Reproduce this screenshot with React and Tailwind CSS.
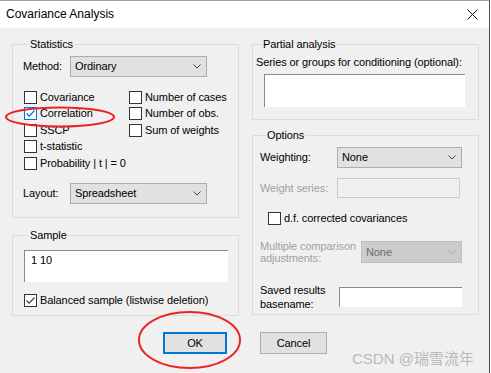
import React from "react";

const Chevron = ({ color = "#333" }) => (
  <svg width="8" height="5" viewBox="0 0 8 5" className="shrink-0">
    <path d="M0.5 0.5 L4 4 L7.5 0.5" fill="none" stroke={color} strokeWidth="1" />
  </svg>
);

const Select = ({ value, width, disabled }) => (
  <div
    className={`flex items-center justify-between pl-[4px] pr-[5px] border ${
      disabled ? "bg-[#cccccc] border-[#bfbfbf] text-[#6d6d6d] h-[22px]" : "bg-[#e1e1e1] border-[#adadad] text-black h-[21px]"
    }`}
    style={{ width }}
  >
    <span>{value}</span>
    <Chevron color={disabled ? "#a8a8a8" : "#444"} />
  </div>
);

const Check = ({ checked, blue }) => (
  <div
    className={`w-[13px] h-[13px] shrink-0 bg-white border flex items-center justify-center ${
      blue ? "border-[#0078d7]" : "border-[#333]"
    }`}
  >
    {checked && (
      <svg width="11" height="11" viewBox="0 0 11 11">
        <path d="M1.5 5.5 L4.2 8.2 L9.5 2.5" fill="none" stroke={blue ? "#0078d7" : "#444"} strokeWidth="1.2" />
      </svg>
    )}
  </div>
);

const CheckRow = ({ label, checked, blue }) => (
  <div className="flex items-center h-[16.5px] gap-[3px]">
    <Check checked={checked} blue={blue} />
    <span className="whitespace-nowrap">{label}</span>
  </div>
);

const Group = ({ title, className, children }) => (
  <div className={`border border-[#dcdcdc] flex flex-col ${className}`}>
    <div className="-mt-[7px] ml-[6px] px-[1px] h-[13px] leading-[13px] w-fit bg-[#f0f0f0]">{title}</div>
    {children}
  </div>
);

const TextBox = ({ className, children }) => (
  <div className={`bg-white border-t border-l border-[#8a8a8a] ${className}`}>{children}</div>
);

export default function App() {
  return (
    <div
      className="w-[491px] h-[373px] bg-white flex text-[11px] leading-[13px] tracking-[-0.1px] text-black overflow-hidden"
      style={{ fontFamily: '"Liberation Sans", Arial, sans-serif' }}
    >
      <div className="w-[490px] h-full flex flex-col border-t border-r border-t-[#a0a0a0] border-r-[#4a4a4a] relative">
        <div className="h-[27px] shrink-0 bg-white flex items-center justify-between pl-[6px] pr-[11px]">
          <span className="text-[12px] tracking-normal">Covariance Analysis</span>
          <svg width="11" height="11" viewBox="0 0 11 11">
            <path d="M0.5 0.5 L10.5 10.5 M10.5 0.5 L0.5 10.5" stroke="#111" strokeWidth="1" />
          </svg>
        </div>

        <div className="flex-1 bg-[#f0f0f0] flex flex-col pt-[16px]">
          <div className="flex items-start pl-[12px] gap-[13px]">
            <div className="w-[227px] flex flex-col">
              <Group title="Statistics" className="h-[174px] px-[10px]">
                <div className="flex items-center mt-[5px]">
                  <span className="w-[47px]">Method:</span>
                  <Select value="Ordinary" width={137} />
                </div>
                <div className="flex mt-[12px] pl-[1px]">
                  <div className="w-[105px] flex flex-col">
                    <CheckRow label="Covariance" />
                    <CheckRow label="Correlation" checked blue />
                    <CheckRow label="SSCP" />
                    <CheckRow label="t-statistic" />
                    <CheckRow label="Probability  |  t  |  = 0" />
                  </div>
                  <div className="flex flex-col">
                    <CheckRow label="Number of cases" />
                    <CheckRow label="Number of obs." />
                    <CheckRow label="Sum of weights" />
                  </div>
                </div>
                <div className="flex items-center mt-[11px]">
                  <span className="w-[47px]">Layout:</span>
                  <Select value="Spreadsheet" width={137} />
                </div>
              </Group>

              <Group title="Sample" className="h-[81px] mt-[17px] px-[10px]">
                <TextBox className="mt-[8px] ml-[1px] w-[204px] h-[32px] pl-[6px] pt-[3px]">1 10</TextBox>
                <div className="mt-[10px] pl-[1px]">
                  <CheckRow label="Balanced sample (listwise deletion)" checked />
                </div>
              </Group>
            </div>

            <div className="w-[227px] flex flex-col">
              <Group title="Partial analysis" className="h-[76px] px-[3px]">
                <div className="mt-[5px] whitespace-nowrap">Series or groups for conditioning (optional):</div>
                <TextBox className="mt-[5px] ml-[8px] w-[201px] h-[33px]" />
              </Group>

              <Group title="Options" className="h-[180px] mt-[15px] px-[7px]">
                <div className="flex items-center mt-[5px]">
                  <span className="w-[77px]">Weighting:</span>
                  <Select value="None" width={125} />
                </div>
                <div className="flex items-center mt-[10px]">
                  <span className="w-[77px] text-[#a0a0a0]">Weight series:</span>
                  <div className="w-[123px] h-[20px] border border-[#cccccc] bg-[#f0f0f0]" />
                </div>
                <div className="mt-[12px] ml-[8px] h-[17px] flex items-center gap-[3px]">
                  <Check />
                  <span>d.f. corrected covariances</span>
                </div>
                <div className="flex items-center mt-[13px]">
                  <span className="w-[101px] leading-[12px] text-[#a0a0a0]">
                    Multiple comparison
                    <br />
                    adjustments:
                  </span>
                  <Select value="None" width={101} disabled />
                </div>
                <div className="flex items-center mt-[19px]">
                  <span className="w-[79px] leading-[14px]">
                    Saved results
                    <br />
                    basename:
                  </span>
                  <TextBox className="w-[123px] h-[20px]" />
                </div>
              </Group>
            </div>
          </div>

          <div className="flex mt-[16px] pl-[163px] gap-[33px]">
            <button className="w-[64px] h-[22px] bg-[#e1e1e1] border-2 border-[#0078d7] flex items-center justify-center">
              OK
            </button>
            <button className="w-[67px] h-[22px] bg-[#e1e1e1] border border-[#adadad] flex items-center justify-center">
              Cancel
            </button>
          </div>
        </div>

        <svg className="absolute left-[4px] top-[105px] pointer-events-none" width="112" height="22" viewBox="0 0 112 22">
          <ellipse cx="56" cy="11" rx="54" ry="9.5" fill="none" stroke="#e8252a" strokeWidth="2" />
        </svg>
        <svg className="absolute left-[137px] top-[309px] pointer-events-none" width="105" height="60" viewBox="0 0 105 60">
          <ellipse cx="52.5" cy="30" rx="50.5" ry="28" fill="none" stroke="#e8252a" strokeWidth="2" />
        </svg>
        <div
          className="absolute left-[352px] top-[349px] text-[15px] leading-[17px] tracking-normal text-[#b4b4b4] opacity-90 whitespace-pre"
          style={{ fontFamily: '"Liberation Sans", "Noto Sans CJK SC", sans-serif' }}
        >
          CSDN @瑞雪流年
        </div>
      </div>
      <div className="flex-1 bg-white" />
    </div>
  );
}
